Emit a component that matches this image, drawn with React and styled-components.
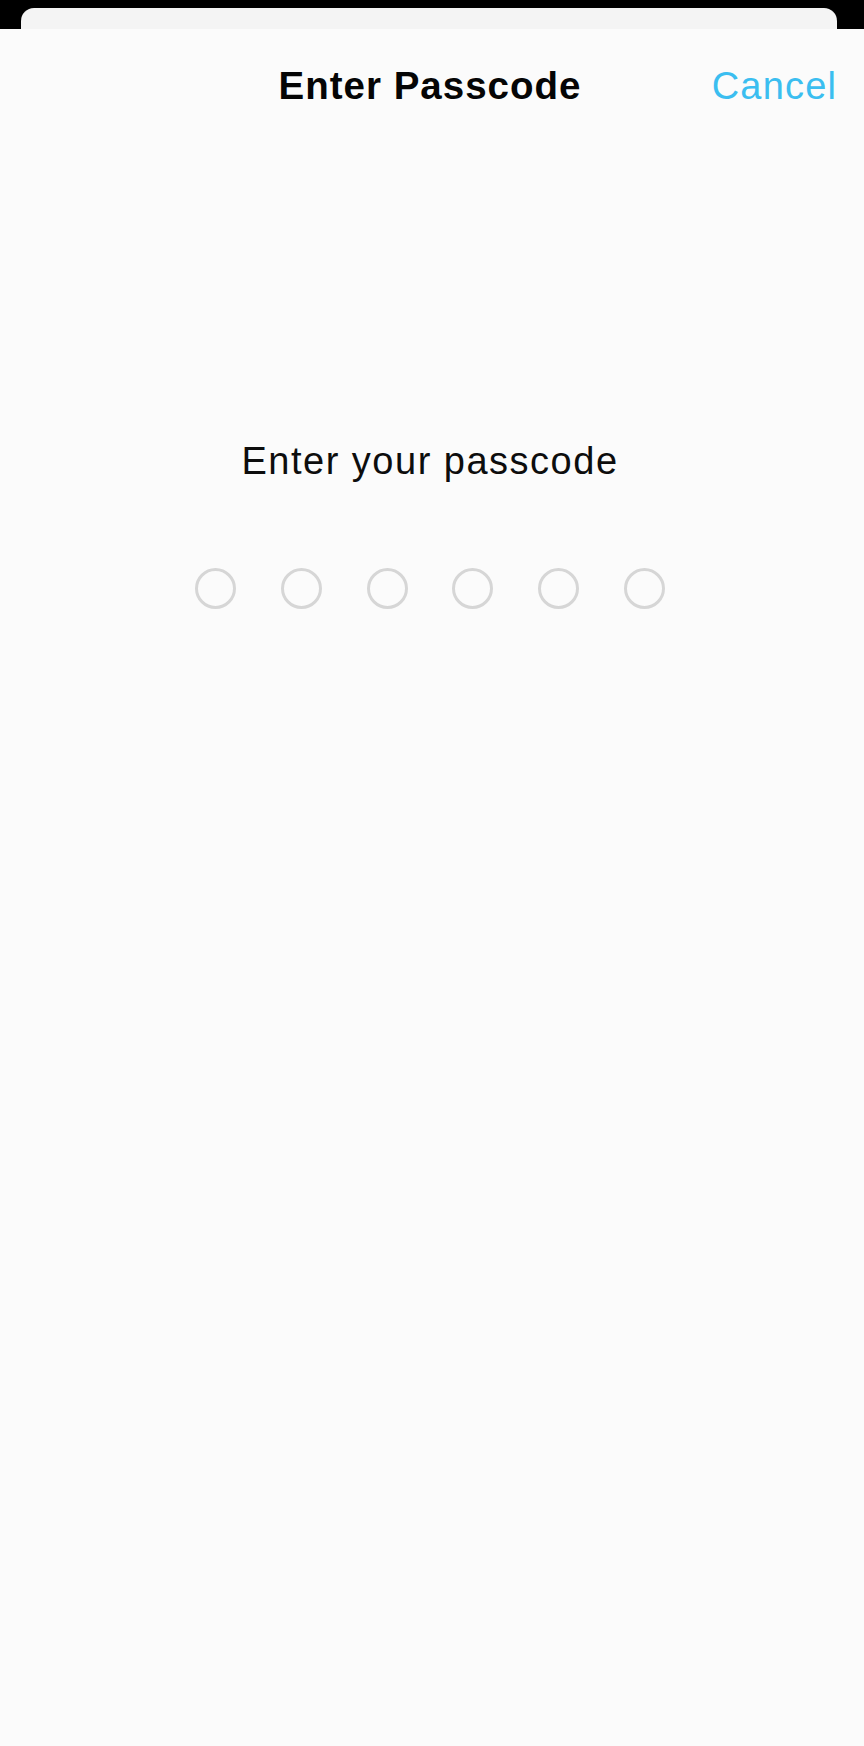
import React from 'react';
import styled, { createGlobalStyle } from 'styled-components';

const GlobalStyle = createGlobalStyle`
  html, body {
    margin: 0;
    padding: 0;
    background: #000;
  }
  body {
    font-family: "Liberation Sans", Arial, sans-serif;
    -webkit-font-smoothing: antialiased;
  }
`;

const Screen = styled.div`
  display: flex;
  flex-direction: column;
  min-height: 1746px;
  background: #000;
`;

/* card of the screen behind the modal sheet */
const BackCard = styled.div`
  height: 21px;
  margin: 8px 27px 0 21px;
  background: #f4f4f4;
  border-radius: 13px 13px 0 0;
`;

const Sheet = styled.div`
  flex: 1;
  display: flex;
  flex-direction: column;
  align-items: center;
  background: #fbfbfb;
  padding: 35px 28px 0 24px;
`;

const Header = styled.header`
  width: 100%;
  display: grid;
  grid-template-columns: 1fr auto 1fr;
  align-items: center;
  line-height: 44px;
`;

const Title = styled.h1`
  grid-column: 2;
  margin: 0;
  font-size: 38.5px;
  font-weight: 700;
  letter-spacing: 1px;
  color: #050505;
`;

const CancelButton = styled.button`
  grid-column: 3;
  justify-self: end;
  border: none;
  background: none;
  padding: 0;
  margin-right: -1.2px;
  font: inherit;
  font-size: 38px;
  letter-spacing: 1.2px;
  line-height: 44px;
  color: #3bbef0;
  cursor: pointer;
`;

const Prompt = styled.p`
  margin: 331px 0 0;
  font-size: 38px;
  line-height: 44px;
  letter-spacing: 1.5px;
  color: #0d0d0d;
`;

const Dots = styled.div`
  display: flex;
  gap: 44.7px;
  margin-top: 85px;
`;

const Dot = styled.span`
  width: 41px;
  height: 41px;
  box-sizing: border-box;
  border-radius: 50%;
  border: 3px solid ${p => (p.$filled ? '#3bbef0' : '#d6d6d6')};
  background: ${p => (p.$filled ? '#3bbef0' : 'transparent')};
`;

const App = () => {
  const length = 6;
  const entered = 0;
  return (
    <>
      <GlobalStyle />
      <Screen>
        <BackCard />
        <Sheet>
          <Header>
            <Title>Enter Passcode</Title>
            <CancelButton>Cancel</CancelButton>
          </Header>
          <Prompt>Enter your passcode</Prompt>
          <Dots>
            {Array.from({ length }).map((_, i) => (
              <Dot key={i} $filled={i < entered} />
            ))}
          </Dots>
        </Sheet>
      </Screen>
    </>
  );
};

export default App;
